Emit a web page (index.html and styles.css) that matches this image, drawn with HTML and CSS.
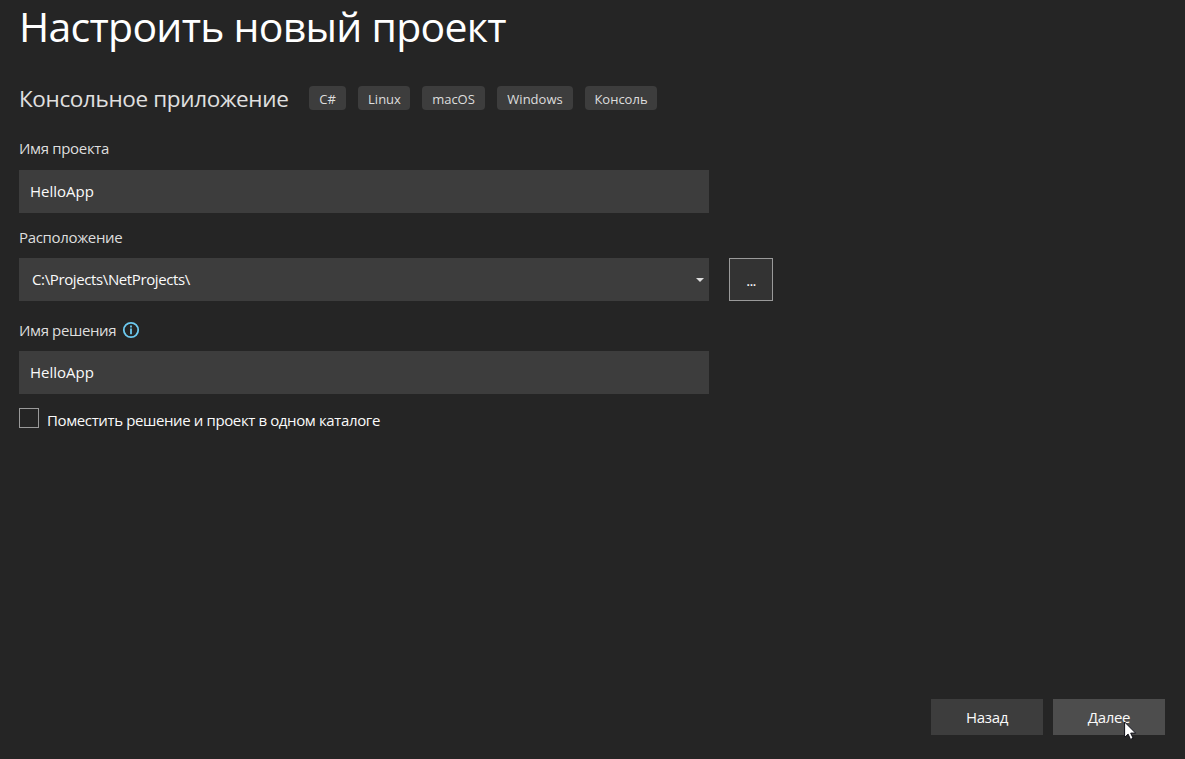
FILE: index.html
```html
<!DOCTYPE html>
<html lang="ru">
<head>
<meta charset="utf-8">
<title>Настроить новый проект</title>
<link rel="stylesheet" href="styles.css">
</head>
<body>
<main class="dialog">
  <h1 class="title">Настроить новый проект</h1>
  <div class="template">
    <h2 class="template-name">Консольное приложение</h2>
    <ul class="tags">
      <li class="tag tag-cs">C#</li>
      <li class="tag tag-linux">Linux</li>
      <li class="tag tag-mac">macOS</li>
      <li class="tag tag-win">Windows</li>
      <li class="tag tag-console">Консоль</li>
    </ul>
  </div>
  <div class="label label-project">Имя проекта</div>
  <div class="field">HelloApp</div>
  <div class="label label-location">Расположение</div>
  <div class="location-row">
    <div class="field combo">
      <span class="path">C:\Projects\NetProjects\</span>
      <svg class="arrow" width="8" height="4" viewBox="0 0 8 4"><path d="M0 0h8L4 4z" fill="#dedede"/></svg>
    </div>
    <button class="browse">...</button>
  </div>
  <div class="label label-solution">
    <span class="solution-text">Имя решения</span>
    <svg class="info" width="18" height="18" viewBox="0 0 18 18"><circle cx="9" cy="9" r="7.2" fill="none" stroke="#6cc9ef" stroke-width="1.8"/><path d="M8.1 4.6h1.8v1.8H8.1zM8.1 7.6h1.8v5.6H8.1z" fill="#6cc9ef"/></svg>
  </div>
  <div class="field">HelloApp</div>
  <div class="check-row">
    <span class="checkbox"></span>
    <span class="check-text">Поместить решение и проект в одном каталоге</span>
  </div>
  <footer class="actions">
    <button class="action">Назад</button>
    <button class="action action-hover">Далее</button>
  </footer>
  <svg class="cursor" width="13" height="20" viewBox="0 0 13 20"><path d="M.6 1v15.4l3.5-3.3 2.4 5.3 2.6-1.2-2.4-5.1h4.9z" fill="#fff" stroke="#101018" stroke-width="1"/></svg>
</main>
</body>
</html>
```
FILE: styles.css
```css
* { box-sizing: border-box; }
body {
  margin: 0;
  background: #252525;
  color: #fafafa;
  font: 15px/20px "Open Sans", "Noto Sans", sans-serif;
}
.dialog {
  position: relative;
  display: flex;
  flex-direction: column;
  width: 1185px;
  height: 759px;
  padding: 0 20px 24px 19px;
  white-space: nowrap;
}
.title {
  margin: 0;
  height: 86px;
  font-size: 41px;
  font-weight: 400;
  line-height: 53px;
  letter-spacing: -0.73px;
  color: #fff;
}
.template { display: flex; height: 24px; }
.template-name {
  width: 290px;
  margin: 0;
  font-size: 22.5px;
  font-weight: 400;
  line-height: 25px;
  letter-spacing: -0.36px;
  color: #e0e0e0;
}
.tags { display: flex; gap: 12px; margin: 0; padding: 0; list-style: none; }
.tag {
  height: 24px;
  border-radius: 4px;
  background: #3d3d3d;
  color: #dedede;
  font-size: 13px;
  line-height: 26px;
  text-align: center;
}
.tag-cs { width: 37px; }
.tag-linux { width: 52px; padding-left: 1px; }
.tag-mac { width: 63px; }
.tag-win { width: 76px; }
.tag-console { width: 72px; }
.label { display: flex; align-items: center; height: 20px; color: #dedede; letter-spacing: -0.33px; }
.label-project { margin: 28px 0 12px; }
.label-location { margin: 14px 0 11px; }
.label-solution { margin: 19px 0 11px; letter-spacing: -0.38px; }
.solution-text { width: 103px; }
.field {
  display: flex;
  align-items: center;
  flex: none;
  width: 690px;
  height: 43px;
  padding: 0 5px 2px 11px;
  background: #3d3d3d;
}
.combo { justify-content: space-between; padding-left: 13px; }
.path { letter-spacing: -0.38px; }
.arrow { margin-top: 2px; }
.location-row { display: flex; gap: 20px; }
.browse {
  width: 44px;
  height: 43px;
  padding: 0;
  border: 1px solid #9a9a9a;
  background: #333;
  color: #fafafa;
  font: inherit;
  letter-spacing: -0.8px;
}
.check-row { display: flex; gap: 8px; margin-top: 14px; height: 24px; line-height: 25px; }
.check-text { letter-spacing: -0.38px; }
.checkbox { width: 20px; height: 20px; border: 1px solid #9a9a9a; }
.actions { display: flex; justify-content: flex-end; gap: 10px; margin-top: auto; }
.action {
  width: 112px;
  height: 36px;
  padding: 0;
  border: 0;
  background: #3d3d3d;
  color: #fafafa;
  font: inherit;
  letter-spacing: -0.35px;
}
.action-hover { background: #4d4d4d; }
.cursor { position: absolute; left: 1124px; top: 721px; }
```
